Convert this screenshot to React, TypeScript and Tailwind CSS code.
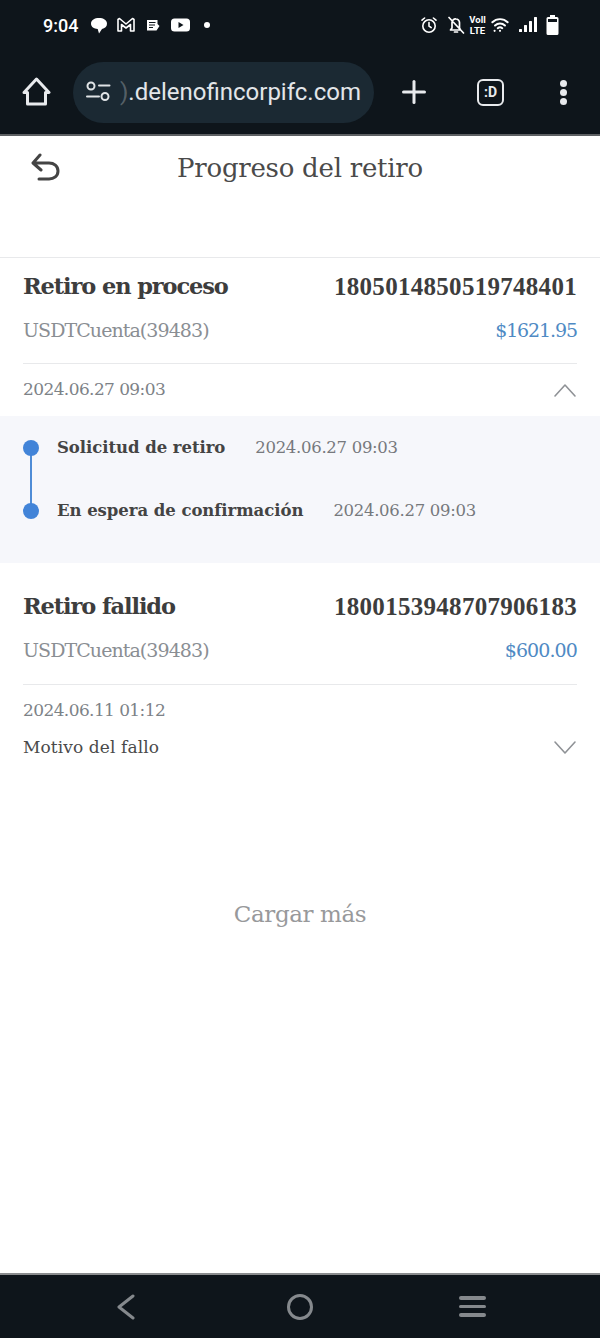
import React from 'react';
import { Plus } from 'lucide-react';

const serif = "font-['DejaVu_Serif',serif]";
const digits = "font-['Liberation_Serif',serif]";

const StatusIcons = () => (
  <div className="flex items-center text-white">
    {/* alarm */}
    <svg width="18" height="18" viewBox="0 0 18 18" fill="none" stroke="currentColor" strokeWidth="1.6" strokeLinecap="round">
      <circle cx="9" cy="10" r="6.2" />
      <path d="M9 6.500V10l2.200 1.600M2 4.200 4.600 2M16 4.200 13.400 2" />
    </svg>
    {/* muted bell */}
    <svg width="18" height="18" viewBox="0 0 18 18" fill="none" stroke="currentColor" strokeWidth="1.7" strokeLinecap="round" strokeLinejoin="round" className="ml-[9px]">
      <path d="M5 6.500V12l-1.500 2h10L12.500 12V6.500A3.500 3.500 0 0 0 9 3a3.500 3.500 0 0 0-4 3.500zM7.500 16h3M2 1.500 16.500 17" />
    </svg>
    <div className="flex flex-col items-center text-[9.5px] font-bold font-['Roboto',sans-serif] w-[15px] ml-[5px]">
      <span className="h-[11px] leading-[11px]">Voll</span>
      <span className="h-[11px] leading-[11px]">LTE</span>
    </div>
    <svg width="18" height="16" viewBox="0 0 20 16" fill="none" stroke="currentColor" strokeWidth="2.200" strokeLinecap="round" className="ml-[6px]">
      <path d="M1.500 5a12 12 0 0 1 17 0M4.500 8.500a8 8 0 0 1 11 0M7.500 11.500a4 4 0 0 1 5 0" />
      <path d="M4 14.500h.01M10 14.500h.01" strokeWidth="2.400" />
    </svg>
    <svg width="18" height="16" viewBox="0 0 18 16" fill="currentColor" className="ml-[10px]">
      <rect x="0" y="12" width="3" height="3" rx="0.5" />
      <rect x="5" y="8" width="3" height="7" rx="0.5" />
      <rect x="10" y="4" width="3" height="11" rx="0.5" />
      <rect x="15" y="0" width="3" height="15" rx="0.5" />
    </svg>
    <svg width="13" height="20" viewBox="0 0 13 20" fill="currentColor" className="ml-[9px]">
      <path d="M4 0h5v2H4zM2 2h9a1.500 1.500 0 0 1 1.500 1.500v15A1.500 1.500 0 0 1 11 20H2a1.500 1.500 0 0 1-1.500-1.500v-15A1.500 1.500 0 0 1 2 2z" />
      <rect x="2" y="4" width="9" height="3" fill="#0e151b" />
    </svg>
  </div>
);

const NotifIcons = () => (
  <div className="flex items-center text-white ml-[13px]">
    {/* chat bubble */}
    <svg width="16" height="17" viewBox="0 0 16 17" fill="currentColor">
      <path d="M8 1c4.200 0 8 1.800 8 5.700 0 2.700-2.200 4.700-5 5.200L8 16.500l-1.300-4.600C3 11.700 0 9.700 0 6.700 0 2.800 3.800 1 8 1z" />
    </svg>
    <svg width="18" height="16" viewBox="0 0 18 16" fill="none" stroke="currentColor" strokeWidth="1.600" strokeLinejoin="round" className="ml-[10px]">
      <path d="M1 2.500v11.500h3.500V7.500L9 11l4.500-3.500V14H17V2.500L15.500 1.500 9 7 2.500 1.500z" />
    </svg>
    <svg width="14" height="13" viewBox="0 0 14 13" fill="currentColor" className="ml-[11px]">
      <path d="M1 1h10.500v4l2 2-3 4.500H1z" />
      <path d="M3 3.500h6.500M3 6h6M3 8.500h4" stroke="#0e151b" strokeWidth="1" />
    </svg>
    <svg width="19" height="14" viewBox="0 0 19 14" className="ml-[11px]">
      <rect width="19" height="13" y="0.500" rx="3.500" fill="currentColor" />
      <path d="M7.500 4v6l5-3z" fill="#0e151b" />
    </svg>
    <span className="w-[6px] h-[6px] rounded-full bg-white ml-[14px]" />
  </div>
);

const Divider = () => <div className="h-px bg-[#e8e9eb]" />;

const Chevron = ({ up }: { up?: boolean }) => (
  <svg width="24" height="15" viewBox="0 0 24 15" fill="none" stroke="#8f9296" strokeWidth="1.600" strokeLinecap="round" strokeLinejoin="round" className={up ? '' : '-mt-[2px]'}>
    <path d={up ? 'M2 13 12 2l10 11' : 'M2 2l10 11L22 2'} />
  </svg>
);

const TimelineRow = ({ label, time }: { label: string; time: string }) => (
  <div className="flex items-center h-[16px]">
    <span className="relative z-10 w-4 h-4 rounded-full bg-[#4284d8] shrink-0" />
    <span className={`ml-[18px] text-[16.5px] font-bold text-[#444] tracking-[-0.05px] whitespace-nowrap ${serif}`}>{label}</span>
    <span className={`ml-[30px] text-[16.5px] text-[#76797d] tracking-[-0.3px] whitespace-nowrap ${serif}`}>{time}</span>
  </div>
);

export default function App() {
  return (
    <div className="w-[600px] h-[1338px] bg-white flex flex-col overflow-hidden font-['Roboto',sans-serif]">
      {/* System + browser bar */}
      <header className="h-[136px] shrink-0 bg-[#0e151b] border-b-2 border-[#5d6063] flex flex-col">
        <div className="h-[50px] flex items-center justify-between pl-[43px] pr-[41px]">
          <div className="flex items-center">
            <span className="text-white text-[18px] font-medium">9:04</span>
            <NotifIcons />
          </div>
          <StatusIcons />
        </div>
        <div className="flex items-center h-[72px] mt-[6px] pl-[22px]">
          <svg width="30" height="30" viewBox="0 0 30 30" fill="none" stroke="#e8eaed" strokeWidth="3" strokeLinejoin="round" className="shrink-0">
            <path d="M2 15.500 14.500 2 27 15.500h-3.500V27h-18V15.500z" />
          </svg>
          <div className="ml-[21px] w-[301px] h-[61px] rounded-full bg-[#1b2933] flex items-center pl-[12px] overflow-hidden">
            <svg width="26" height="24" viewBox="0 0 26 24" fill="none" stroke="#e0e3e6" strokeWidth="2" strokeLinecap="round" className="shrink-0">
              <circle cx="6" cy="6" r="3.500" />
              <path d="M14 5.500h10.500M2 16.500H14" />
              <circle cx="20" cy="16.500" r="3.500" />
            </svg>
            <span className="ml-[9px] text-[#e3e6e9]/30 text-[24px] whitespace-nowrap">)</span>
            <span className="text-[#e3e6e9] text-[24px] whitespace-nowrap">.delenofincorpifc.com</span>
          </div>
          <Plus className="ml-[22px] w-[36px] h-[36px] text-[#e8eaed]" strokeWidth={2} />
          <div className="ml-[45px] w-[27px] h-[27px] rounded-[6px] border-[2.500px] border-[#e8eaed] flex items-center justify-center text-[#e8eaed] text-[14px] font-bold">:D</div>
          <div className="ml-[56px] flex flex-col gap-[2px]">
            <span className="w-[7px] h-[7px] rounded-full bg-[#e8eaed]" />
            <span className="w-[7px] h-[7px] rounded-full bg-[#e8eaed]" />
            <span className="w-[7px] h-[7px] rounded-full bg-[#e8eaed]" />
          </div>
        </div>
      </header>

      <main className={`flex-1 flex flex-col ${serif}`}>
        {/* Title */}
        <div className="h-[122px] shrink-0 border-b border-[#e8e9eb] relative">
          <svg width="32" height="30" viewBox="0 0 32 30" fill="none" stroke="#444" strokeWidth="3" strokeLinecap="round" strokeLinejoin="round" className="absolute left-[31px] top-[17px]">
            <path d="M9 2 2 10l8 7M3 10h15c5 0 9 3 9 8s-4 8-9 8H8" />
          </svg>
          <h1 className="pt-[12px] text-center text-[26px] leading-[40px] text-[#4a4a4a] tracking-[-0.25px]">Progreso del retiro</h1>
        </div>

        {/* Card 1 */}
        <section className="px-[23px]">
          <div className="flex items-center justify-between h-[56px] pt-[1px] text-[22.500px] font-bold text-[#3d3d3d] tracking-[-1.100px]">
            <span>Retiro en proceso</span>
            <span className={`text-[25px] tracking-[0.29px] ${digits}`}>1805014850519748401</span>
          </div>
          <div className="flex items-center justify-between h-[32px] text-[19px]">
            <span className="text-[#8a8e93] tracking-[-0.93px]">USDTCuenta(39483)</span>
            <span className="text-[#4f8ac4] tracking-[-1.100px]">$1621.95</span>
          </div>
          <div className="h-[17px]" />
          <Divider />
          <div className="flex items-center justify-between h-[52px] text-[#7d8287] text-[17px] tracking-[-0.6px]">
            <span>2024.06.27 09:03</span>
            <Chevron up />
          </div>
        </section>

        {/* Progress timeline */}
        <section className="h-[147px] shrink-0 bg-[#f6f7fb] px-[23px] pt-[24px]">
          <div className="relative flex flex-col gap-[47px]">
            <span className="absolute left-[7px] top-[8px] w-[2px] h-[56px] bg-[#4f8cd6]" />
            <TimelineRow label="Solicitud de retiro" time="2024.06.27 09:03" />
            <TimelineRow label="En espera de confirmación" time="2024.06.27 09:03" />
          </div>
        </section>

        {/* Card 2 */}
        <section className="px-[23px]">
          <div className="flex items-center justify-between h-[55px] mt-[16px] text-[22.500px] font-bold text-[#3d3d3d] tracking-[-1.100px]">
            <span>Retiro fallido</span>
            <span className={`text-[25px] tracking-[0.29px] ${digits}`}>1800153948707906183</span>
          </div>
          <div className="flex items-center justify-between h-[32px] text-[19px]">
            <span className="text-[#8a8e93] tracking-[-0.93px]">USDTCuenta(39483)</span>
            <span className="text-[#4f8ac4] tracking-[-0.9px]">$600.00</span>
          </div>
          <div className="h-[18px]" />
          <Divider />
          <div className="flex items-center h-[51px] text-[#7d8287] text-[17px] tracking-[-0.6px]">2024.06.11 01:12</div>
          <div className="flex items-center justify-between h-[24px] text-[#4a4a4a] text-[17px] tracking-[0.1px]">
            <span>Motivo del fallo</span>
            <Chevron />
          </div>
        </section>

        <div className="mt-[139px] text-center text-[#98999b] text-[23px] leading-[30px] tracking-[-0.4px]">Cargar más</div>
      </main>

      {/* Android nav bar */}
      <footer className="h-[65px] shrink-0 bg-[#0e151b] border-t-2 border-[#8a8c8e] flex items-center pl-[115px]">
        <svg width="20" height="28" viewBox="0 0 20 28" fill="none" stroke="#85898d" strokeWidth="3" strokeLinecap="round" strokeLinejoin="round">
          <path d="M18 3 4 14l14 11" />
        </svg>
        <span className="ml-[152px] w-[26px] h-[26px] rounded-full border-[3px] border-[#85898d]" />
        <div className="ml-[146px] flex flex-col gap-[5px]">
          <span className="w-[27px] h-[3.500px] rounded bg-[#85898d]" />
          <span className="w-[27px] h-[3.500px] rounded bg-[#85898d]" />
          <span className="w-[27px] h-[3.500px] rounded bg-[#85898d]" />
        </div>
      </footer>
    </div>
  );
}
